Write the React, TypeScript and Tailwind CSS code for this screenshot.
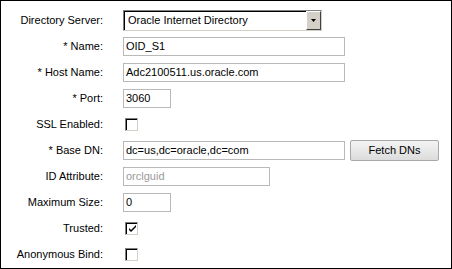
import React from "react";

type Row = { label: string; field: React.ReactNode };

function TextBox({ value, width, disabled }: { value: string; width: string; disabled?: boolean }) {
  return (
    <div
      className={`flex h-[19px] items-center border border-[#b9b9b9] bg-white pl-[2px] ${width} ${
        disabled ? "text-[#9a9a9a]" : "text-black"
      }`}
    >
      {value}
    </div>
  );
}

function CheckBox({ checked }: { checked?: boolean }) {
  return (
    <div className="ml-[2px] flex h-[13px] w-[13px] items-center justify-center border-t border-l border-t-[#808080] border-l-[#808080] border-r border-b border-r-[#d4d0c8] border-b-[#d4d0c8] bg-white">
      <div className="flex h-[11px] w-[11px] items-center justify-center border-t border-l border-t-black border-l-black">
        {checked && (
          <svg width="9" height="9" viewBox="0 0 9 9">
            <path d="M1 4 L3 6 L8 1 L8 3 L3 8 L1 6 Z" fill="#000" />
          </svg>
        )}
      </div>
    </div>
  );
}

function Select() {
  return (
    <div className="flex h-[21px] w-[199px] items-stretch border border-t-[#808080] border-l-[#808080] border-r-[#d4d0c8] border-b-[#d4d0c8] bg-white">
      <div className="flex flex-1 items-center border-t border-l border-t-black border-l-black pl-[3px]">
        Oracle Internet Directory
      </div>
      <div className="flex w-[15px] items-center justify-center border border-t-white border-l-white border-r-[#404040] border-b-[#404040] bg-[#d4d0c8]">
        <svg width="5" height="3" viewBox="0 0 5 3">
          <path d="M0 0 H5 L2.5 3 Z" fill="#000" />
        </svg>
      </div>
    </div>
  );
}

const ROWS: Row[] = [
  { label: "Directory Server:", field: <Select /> },
  { label: "* Name:", field: <TextBox value="OID_S1" width="w-[222px]" /> },
  { label: "* Host Name:", field: <TextBox value="Adc2100511.us.oracle.com" width="w-[222px]" /> },
  { label: "* Port:", field: <TextBox value="3060" width="w-[48px]" /> },
  { label: "SSL Enabled:", field: <CheckBox /> },
  {
    label: "* Base DN:",
    field: (
      <div className="flex items-center gap-[5px]">
        <TextBox value="dc=us,dc=oracle,dc=com" width="w-[222px]" />
        <div className="flex h-[21px] w-[89px] items-center justify-center rounded-[2px] border border-[#a8a8a8] bg-gradient-to-b from-[#f4f4f4] to-[#dcdcdc]">
          Fetch DNs
        </div>
      </div>
    )
  },
  { label: "ID Attribute:", field: <TextBox value="orclguid" width="w-[147px]" disabled /> },
  { label: "Maximum Size:", field: <TextBox value="0" width="w-[48px]" /> },
  { label: "Trusted:", field: <CheckBox checked /> },
  { label: "Anonymous Bind:", field: <CheckBox /> }
];

export default function App() {
  return (
    <div
      className="h-[269px] w-[452px] border border-black bg-white pt-[6px] text-[11px] text-black"
      style={{ fontFamily: '"Liberation Sans", Arial, sans-serif' }}
    >
      {ROWS.map((row) => (
        <div key={row.label} className="flex h-[26px] items-center">
          <div className="w-[102px] text-right">{row.label}</div>
          <div className="ml-[20px]">{row.field}</div>
        </div>
      ))}
    </div>
  );
}
